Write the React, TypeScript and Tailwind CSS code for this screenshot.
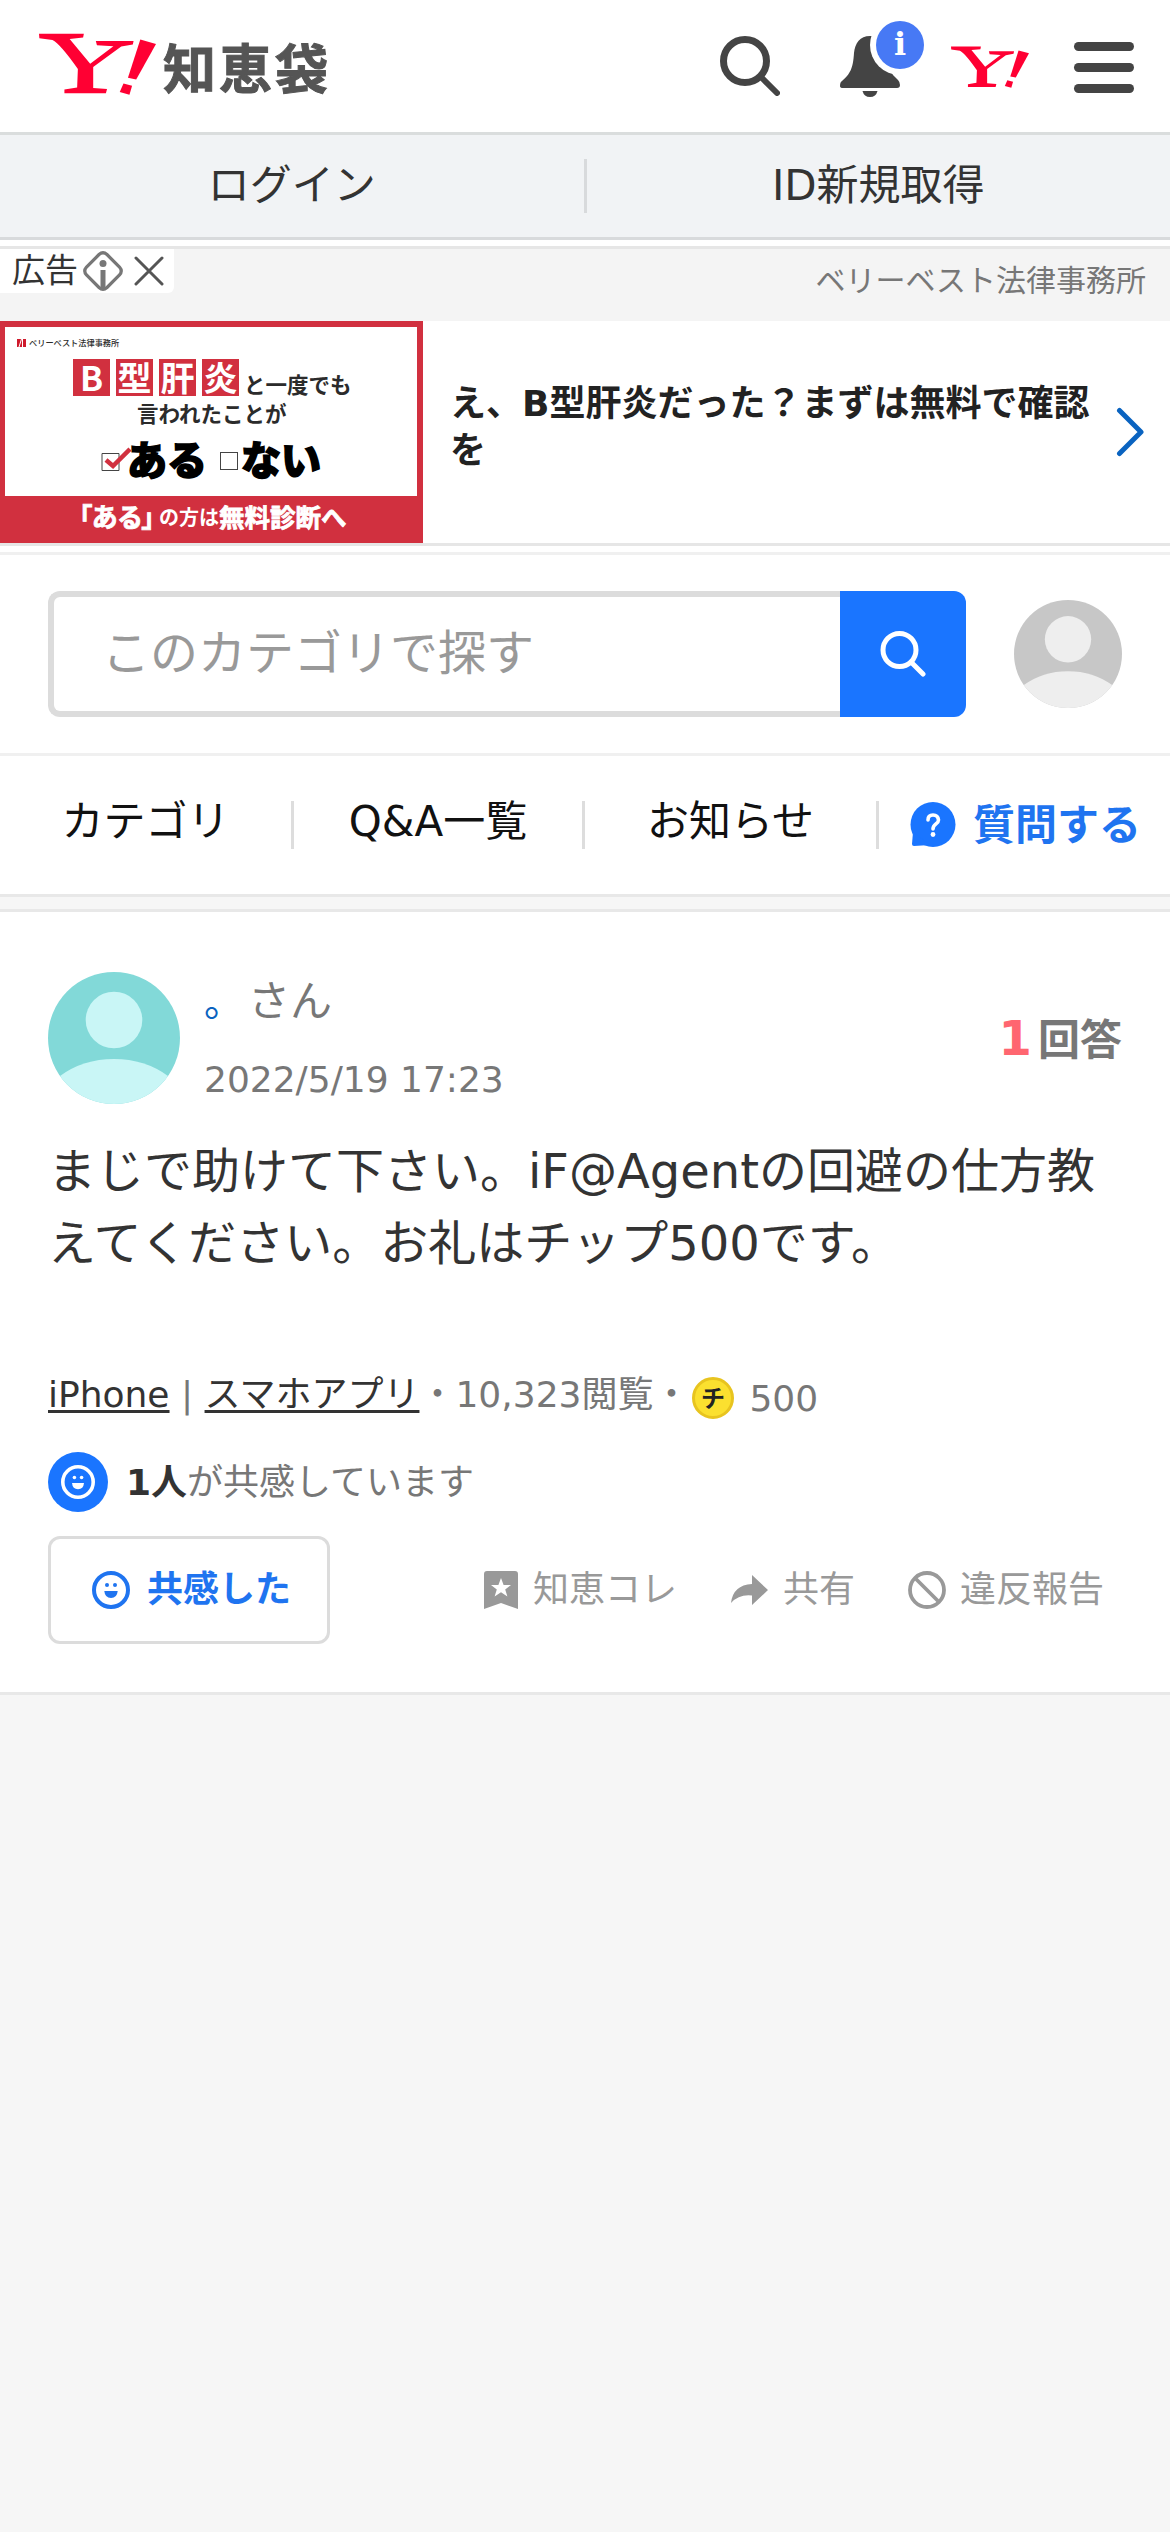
import React from "react";

function YahooMark({ className }: { className: string }) {
  return (
    <svg viewBox="105 97 313 188" preserveAspectRatio="none" className={className} fill="#ff0033">
      <path d="M105 99H225L223 111L187 115L242 190L304 137L260 134L257 121H358L356 132L325 138L250 200L250 264L287 267L284 280H173V268L207 262L209 206Q162 130 141 118L106 113Z" />
      <path d="M376 117L418 130L365 238L343 233Z" />
      <path d="M331 250L354 257L347 284L321 276Z" />
    </svg>
  );
}

function Avatar({ className, bg, fg, id }: { className: string; bg: string; fg: string; id: string }) {
  return (
    <svg viewBox="0 0 132 132" className={className}>
      <clipPath id={id}>
        <circle cx="66" cy="66" r="66" />
      </clipPath>
      <g clipPath={`url(#${id})`}>
        <rect width="132" height="132" fill={bg} />
        <circle cx="66" cy="48" r="28.3" fill={fg} />
        <path d="M12 104Q35 87 66 87T120 104V132H12Z" fill={fg} />
      </g>
    </svg>
  );
}

function Smile({ className }: { className: string }) {
  return (
    <svg viewBox="0 0 38 38" className={className} fill="currentColor">
      <circle cx="19" cy="19" r="17" fill="none" stroke="currentColor" strokeWidth="4" />
      <circle cx="15" cy="14" r="2" />
      <circle cx="23" cy="14" r="2" />
      <path d="M12.3 20H25.7Q25 27 19 27T12.3 20Z" />
    </svg>
  );
}

function Header() {
  return (
    <header className="flex h-[135px] items-start border-b-[3px] border-[#dadddd] bg-white">
      <YahooMark className="mt-[33px] ml-[39px] h-[62px] w-[117px] shrink-0" />
      <div className="mt-[41px] ml-[7px] text-[53px] leading-[60px] font-bold tracking-[3px] whitespace-nowrap text-[#555] [-webkit-text-stroke:1px_#555]">知恵袋</div>
      <svg viewBox="0 0 60 60" className="mt-9 ml-auto size-[60px] shrink-0" fill="none" stroke="#444" strokeLinecap="round">
        <circle cx="25" cy="25" r="21.5" strokeWidth="7" />
        <path d="M42 42L57 57" strokeWidth="6" />
      </svg>
      <div className="relative mt-9 ml-[60px] h-[61px] w-[60px] shrink-0">
        <svg viewBox="0 0 60 61" className="h-[61px] w-[60px]" fill="#444">
          <path d="M30 0C20 0 15 7 14 17C13 33 10 38 2 45Q0 46 0 50Q0 52 3 52H57Q60 52 60 49Q60 46 58 44Q46 34 46 17C45 7 40 0 30 0Z" />
          <path d="M22.500 55H37.500Q36 61 30 61T22.500 55Z" />
        </svg>
        <div className="absolute -top-[21px] left-[30px] flex size-[60px] items-center justify-center rounded-full bg-white">
          <div className="flex size-12 items-center justify-center rounded-full bg-[#4779f5] font-['DejaVu_Serif',serif] text-[32px] leading-[48px] font-bold text-white">
            <span className="-mt-[2px]">i</span>
          </div>
        </div>
      </div>
      <YahooMark className="mt-[46px] ml-[51px] h-[42px] w-[78px] shrink-0" />
      <div className="mt-[42px] mr-9 ml-[45px] flex w-[60px] shrink-0 flex-col gap-3">
        <div className="h-[9px] rounded-full bg-[#444]" />
        <div className="h-[9px] rounded-full bg-[#444]" />
        <div className="h-[9px] rounded-full bg-[#444]" />
      </div>
    </header>
  );
}

function LoginBar() {
  return (
    <div className="flex h-[105px] items-center border-b-[3px] border-[#d8dadc] bg-[#f1f3f5] text-center text-[42px] leading-[60px] text-[#333]">
      <div className="flex-1">ログイン</div>
      <div className="h-[54px] w-[3px] bg-[#d8dadc]" />
      <div className="flex-1">ID新規取得</div>
    </div>
  );
}

function Banner() {
  return (
    <div className="flex h-[222px] w-[423px] shrink-0 flex-col bg-[#d1303f] px-[5px] pt-[6px] font-bold whitespace-nowrap">
      <div className="h-[169px] w-[412px] bg-white text-[#2b2b2b]">
        <div className="flex h-8 items-center pl-3 text-[8px] leading-8">
          <svg viewBox="0 0 9 8" className="mr-[3px] h-2 w-[9px]">
            <path d="M0 0H9V8H0Z" fill="#cf1a2c" />
            <path d="M4.500 0L2 8M5.500 0V8" stroke="#fff" strokeWidth="1" />
          </svg>
          <span className="text-[8.200px] font-medium">ベリーベスト法律事務所</span>
        </div>
        <div className="flex h-[37px] items-end pl-[68px]">
          <div className="flex gap-[6px] text-[34px] leading-[35px] text-white">
            {["B", "型", "肝", "炎"].map((c) => (
              <div key={c} className="h-[37px] w-[37px] bg-[#d1303f] text-center font-['Noto_Sans_CJK_JP',sans-serif]">{c}</div>
            ))}
          </div>
          <span className="ml-[5px] text-[21.500px] leading-5">と一度でも</span>
        </div>
        <div className="pl-[132px] text-[21.500px] leading-[38px]">言われたことが</div>
        <div className="flex h-12 items-center pl-[96px] text-[40px] leading-[48px] font-black text-black [-webkit-text-stroke:1.5px_black]">
          <svg viewBox="0 0 30 30" className="mt-[2px] h-[30px] w-[30px]" fill="none">
            <path d="M1 9.500H18V26.500H1Z" stroke="#444" />
            <path d="M5 16L12 22L29 5" stroke="#d1303f" strokeWidth="4.500" />
          </svg>
          <span className="mt-[6px] -ml-[4px]">ある</span>
          <div className="mt-[6px] mr-[3px] ml-[13px] size-[18px] border border-[#444]" />
          <span className="mt-[6px]">ない</span>
        </div>
      </div>
      <div className="flex h-[45px] items-center pl-[74px] leading-[45px] text-white">
        <span className="w-[80px] text-[26px] [font-feature-settings:'palt'] [-webkit-text-stroke:0.8px_white]">「ある」</span>
        <span className="text-[20px]">の方は</span>
        <span className="text-[25.500px] [-webkit-text-stroke:0.8px_white]">無料診断へ</span>
      </div>
    </div>
  );
}

function Advert() {
  return (
    <section className="mt-[6px] border-y-[3px] border-[#e6e6e6] bg-white">
      <div className="flex h-[72px] items-start justify-between bg-[#f4f4f4]">
        <div className="flex h-11 w-[174px] items-center rounded-br-md bg-white pl-3 text-[33px] leading-[44px] text-[#333]">
          <span>広告</span>
          <svg viewBox="0 0 40 40" className="ml-[5px] h-10 w-10" fill="none" stroke="#777" strokeWidth="3.200">
            <path d="M16 3.500Q20 0 24 3.500L36.500 16Q40 20 36.500 24L24 36.500Q20 40 16 36.500L3.500 24Q0 20 3.500 16Z" />
            <path d="M20 19V38" strokeWidth="5" />
            <circle cx="20" cy="12.500" r="3.500" fill="#777" stroke="none" />
          </svg>
          <svg viewBox="0 0 30 30" className="ml-[11px] h-[30px] w-[30px]" stroke="#555" strokeWidth="3" strokeLinecap="round">
            <path d="M2 2L28 28M28 2L2 28" />
          </svg>
        </div>
        <div className="mt-[10px] mr-6 text-[30px] leading-[44px] text-[#777]">ベリーベスト法律事務所</div>
      </div>
      <div className="flex h-[222px] items-center">
        <Banner />
        <div className="-mt-[10px] ml-[27px] flex h-[108px] w-[652px] shrink-0 flex-col justify-center text-[36px] leading-[47px] font-bold text-[#222]">
          え、B型肝炎だった？まずは無料で確認を
        </div>
        <svg viewBox="0 0 30 50" className="ml-[14px] h-[50px] w-[30px]" fill="none" stroke="#0a63c0" strokeWidth="5" strokeLinecap="round" strokeLinejoin="round">
          <path d="M3.500 3.500L25 25L3.500 46.500" />
        </svg>
      </div>
    </section>
  );
}

function SearchBar() {
  return (
    <section className="mt-[6px] flex h-[204px] items-center border-y-[3px] border-[#f0f0f0] bg-white pr-12 pl-12">
      <div className="flex h-[126px] w-[792px] items-center rounded-l-[12px] border-y-[6px] border-l-[6px] border-[#dcdcdc] pb-[3px] pl-[48px] text-[48px] leading-[72px] text-[#999]">このカテゴリで探す</div>
      <div className="flex h-[126px] w-[126px] items-center justify-center rounded-r-[12px] bg-[#1a75ff]">
        <svg viewBox="0 0 46 46" className="h-[46px] w-[46px]" fill="none" stroke="#fff" strokeWidth="5" strokeLinecap="round">
          <circle cx="19.500" cy="19" r="16.500" />
          <path d="M31 31L43 43" />
        </svg>
      </div>
      <Avatar id="visitor" className="ml-auto size-[108px]" bg="#c7c7c7" fg="#eee" />
    </section>
  );
}

function Nav() {
  return (
    <nav className="flex h-[141px] items-center border-b-[3px] border-[#e8e8e8] bg-white text-center text-[42px] leading-[60px] whitespace-nowrap text-[#111]">
      <div className="w-[291px] pb-[6px]">カテゴリ</div>
      <div className="h-12 w-[3px] bg-[#ddd]" />
      <div className="w-[288px] pb-[6px]">Q&amp;A一覧</div>
      <div className="h-12 w-[3px] bg-[#ddd]" />
      <div className="w-[291px] pb-[6px]">お知らせ</div>
      <div className="h-12 w-[3px] bg-[#ddd]" />
      <div className="flex flex-1 items-center pl-[31px] font-bold text-[#1f74f0]">
        <svg viewBox="0 0 46 46" className="h-[46px] w-[46px]">
          <circle cx="23" cy="22.500" r="22.500" fill="#1a75ff" />
          <path d="M3 30L2 42Q2 44 4 44L20 43Z" fill="#1a75ff" />
          <path d="M18 18Q18 13 23 13T28.500 18C28.500 22 23 22 23 27" fill="none" stroke="#fff" strokeWidth="3.600" strokeLinecap="round" />
          <circle cx="23" cy="32.500" r="2.400" fill="#fff" />
        </svg>
        <span className="mt-[2px] ml-[17px]">質問する</span>
      </div>
    </nav>
  );
}

function Question() {
  return (
    <article className="mt-3 h-[786px] border-y-[3px] border-[#e8e8e8] bg-white px-12 pt-[60px]">
      <div className="flex h-[132px] items-center">
        <Avatar id="asker" className="size-[132px] shrink-0" bg="#82d9d8" fg="#c9f6f6" />
        <div className="mt-[3px] ml-6 text-[#777]">
          <div className="text-[42px] leading-[60px]">
            <span className="text-[39px] text-[#0a63c0]">。</span>
            <span className="ml-[5px]">さん</span>
          </div>
          <div className="mt-[20px] text-[36px] leading-[54px]">2022/5/19 17:23</div>
        </div>
        <div className="mt-[2px] ml-auto flex items-baseline text-[42px] leading-[60px] font-bold text-[#777]">
          <span className="mr-[6px] text-[48px] text-[#ff6670]">1</span>
          <span>回答</span>
        </div>
      </div>
      <p className="mt-[31px] text-[48px] leading-[72px] text-[#333]">まじで助けて下さい。iF@Agentの回避の仕方教えてください。お礼はチップ500です。</p>
      <div className="mt-[89px] flex h-[54px] items-center text-[36px] leading-[54px] whitespace-pre text-[#777]">
        <span className="text-[#333] underline decoration-[3px] underline-offset-[3px]">iPhone</span>
        <span> | </span>
        <span className="text-[#333] underline decoration-[3px] underline-offset-[3px]">スマホアプリ</span>
        <span>・10,323閲覧・</span>
        <svg viewBox="0 0 42 42" className="mt-[6px] ml-[3px] h-[42px] w-[42px]">
          <circle cx="21" cy="21" r="19.500" fill="#fbe02f" stroke="#e8c41f" strokeWidth="3" />
          <text x="21" y="29.500" textAnchor="middle" fontSize="24" fontWeight="700" fill="#222">チ</text>
        </svg>
        <span className="mt-[7px] ml-[15px]">500</span>
      </div>
      <div className="mt-[30px] flex h-[60px] items-center text-[36px] leading-[54px] text-[#777]">
        <div className="flex size-[60px] items-center justify-center rounded-full bg-[#1a75ff] text-white">
          <Smile className="size-[34px]" />
        </div>
        <span className="mt-[2px] ml-[18px]"><b className="text-[#333]">1人</b>が共感しています</span>
      </div>
      <div className="mt-6 flex h-[108px] items-center text-[36px] leading-[54px] text-[#999]">
        <div className="flex h-[108px] w-[282px] items-center rounded-[12px] border-[3px] border-[#dcdcdc] pl-[41px] font-bold text-[#1f74f0]">
          <Smile className="size-[38px]" />
          <span className="ml-[17px]">共感した</span>
        </div>
        <svg viewBox="0 0 34 38" className="ml-[154px] h-[38px] w-[34px]">
          <path d="M0 3Q0 0 3 0H31Q34 0 34 3V38L17 32L0 38Z" fill="#999" />
          <path d="M17 7L19.600 14H27L21.200 18.500L23.400 25.600L17 21.300L10.600 25.600L12.800 18.500L7 14H14.400Z" fill="#fff" />
        </svg>
        <span className="ml-[15px]">知恵コレ</span>
        <svg viewBox="0 0 37 30" className="ml-[54px] h-[30px] w-[37px]" fill="#999">
          <path d="M21 0L37 15L21 30V20.500Q8 19 0 28Q2 10 21 9Z" />
        </svg>
        <span className="ml-[15px]">共有</span>
        <svg viewBox="0 0 38 38" className="ml-[53px] h-[38px] w-[38px]" fill="none" stroke="#999" strokeWidth="3.800">
          <circle cx="19" cy="19" r="17" />
          <path d="M7 7L31 31" />
        </svg>
        <span className="ml-[14px]">違反報告</span>
      </div>
    </article>
  );
}

export default function App() {
  return (
    <div lang="ja" className="min-h-[2532px] w-[1170px] overflow-hidden bg-[#f6f6f6] font-['DejaVu_Sans','Noto_Sans_CJK_JP',sans-serif]">
      <div className="bg-white">
        <Header />
        <LoginBar />
        <Advert />
        <SearchBar />
        <Nav />
      </div>
      <Question />
    </div>
  );
}
